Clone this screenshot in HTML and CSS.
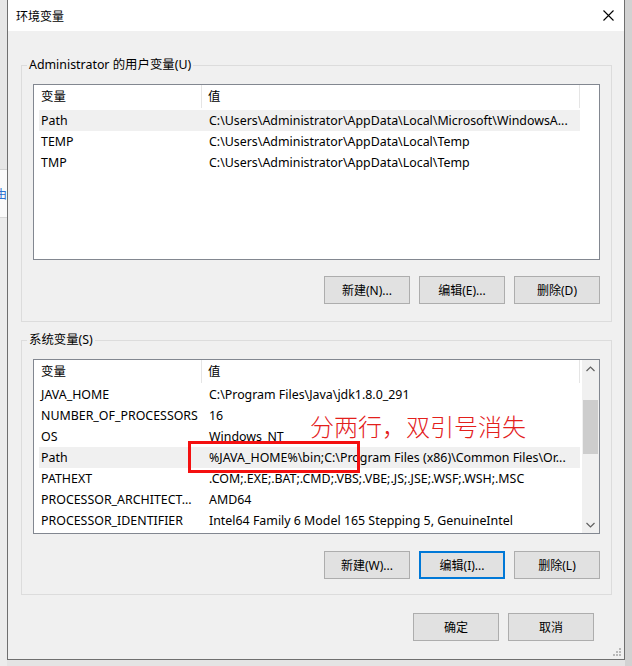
FILE: index.html
```html
<!DOCTYPE html>
<html lang="zh-CN">
<head>
<meta charset="utf-8">
<title>环境变量</title>
<link rel="stylesheet" href="styles.css">
</head>
<body>
<div class="screen">
  <div class="bg-left">
    <div class="bg-top"></div>
    <div class="bg-band"><span class="glyph">由</span></div>
    <div class="bg-rest"></div>
  </div>

  <div class="dialog">
    <div class="titlebar">
      <span class="title">环境变量</span>
      <svg class="close" width="11" height="11" viewBox="0 0 11 11"><path d="M0.5 0.5 L10.5 10.5 M10.5 0.5 L0.5 10.5" stroke="#000" stroke-width="1.1" fill="none"/></svg>
    </div>

    <div class="body">
      <fieldset class="group">
        <legend>Administrator 的用户变量(U)</legend>
        <div class="list list-user">
          <div class="rows">
            <div class="row head"><div>变量</div><div>值</div></div>
            <div class="row sel"><div>Path</div><div>C:\Users\Administrator\AppData\Local\Microsoft\WindowsA...</div></div>
            <div class="row"><div>TEMP</div><div>C:\Users\Administrator\AppData\Local\Temp</div></div>
            <div class="row"><div>TMP</div><div>C:\Users\Administrator\AppData\Local\Temp</div></div>
          </div>
        </div>
        <div class="btns">
          <div class="btn">新建(N)...</div>
          <div class="btn">编辑(E)...</div>
          <div class="btn">删除(D)</div>
        </div>
      </fieldset>

      <fieldset class="group group-sys">
        <legend>系统变量(S)</legend>
        <div class="list list-sys">
          <div class="rows">
            <div class="row head head-sys"><div>变量</div><div>值</div></div>
            <div class="row"><div>JAVA_HOME</div><div>C:\Program Files\Java\jdk1.8.0_291</div></div>
            <div class="row"><div>NUMBER_OF_PROCESSORS</div><div>16</div></div>
            <div class="row"><div>OS</div><div>Windows_NT</div></div>
            <div class="row sel"><div>Path</div><div>%JAVA_HOME%\bin;C:\Program Files (x86)\Common Files\Or...</div></div>
            <div class="row"><div>PATHEXT</div><div>.COM;.EXE;.BAT;.CMD;.VBS;.VBE;.JS;.JSE;.WSF;.WSH;.MSC</div></div>
            <div class="row"><div>PROCESSOR_ARCHITECT...</div><div>AMD64</div></div>
            <div class="row"><div>PROCESSOR_IDENTIFIER</div><div>Intel64 Family 6 Model 165 Stepping 5, GenuineIntel</div></div>
          </div>
          <div class="scroll">
            <div class="arrow"><svg width="9" height="6" viewBox="0 0 9 6"><path d="M0.5 5 L4.5 1 L8.5 5" stroke="#606060" stroke-width="1.2" fill="none"/></svg></div>
            <div class="thumb"></div>
            <div class="spacer"></div>
            <div class="arrow"><svg width="9" height="6" viewBox="0 0 9 6"><path d="M0.5 1 L4.5 5 L8.5 1" stroke="#606060" stroke-width="1.2" fill="none"/></svg></div>
          </div>
        </div>
        <div class="btns btns-sys">
          <div class="btn">新建(W)...</div>
          <div class="btn focus">编辑(I)...</div>
          <div class="btn">删除(L)</div>
        </div>
      </fieldset>

      <div class="footer">
        <div class="btn">确定</div>
        <div class="btn">取消</div>
      </div>

      <svg class="grip" width="8" height="8" viewBox="0 0 8 8">
        <rect x="6" y="0" width="2" height="2" fill="#b8b8b8"/>
        <rect x="3" y="3" width="2" height="2" fill="#b8b8b8"/>
        <rect x="6" y="3" width="2" height="2" fill="#b8b8b8"/>
        <rect x="0" y="6" width="2" height="2" fill="#b8b8b8"/>
        <rect x="3" y="6" width="2" height="2" fill="#b8b8b8"/>
        <rect x="6" y="6" width="2" height="2" fill="#b8b8b8"/>
      </svg>
    </div>
  </div>

  <div class="bg-right"></div>

  <div class="mark-box"></div>
  <div class="mark-text">分两行，双引号消失</div>
</div>
</body>
</html>
```

FILE: styles.css
```css
* { box-sizing: border-box; }
html, body { margin: 0; padding: 0; }
body {
  width: 632px;
  height: 666px;
  overflow: hidden;
  background: #e4e4e4;
  font-family: "Noto Sans", "Noto Sans CJK SC", sans-serif;
  font-size: 12.4px;
  color: #000;
}
.screen {
  position: relative;
  display: flex;
  width: 632px;
  height: 666px;
}

/* background window slices */
.bg-left {
  width: 7px;
  flex: none;
  display: flex;
  flex-direction: column;
  overflow: hidden;
  background: #ececec;
}
.bg-top { height: 170px; background: #e6e6e6; border-bottom: 1px solid #d2d2d2; }
.bg-band { height: 48px; background: #fafafa; border-bottom: 1px solid #d8d8d8; display: flex; align-items: center; }
.glyph { color: #2c6fd0; margin-left: -5px; font-size: 12px; }
.bg-rest { flex: 1; background: #ececec; }
.bg-right { width: 7px; flex: none; background: #d2d2d2; }

/* dialog */
.dialog {
  width: 618px;
  height: 660px;
  flex: none;
  border: 1px solid #6f6f6f;
  border-top: none;
  background: #f0f0f0;
  display: flex;
  flex-direction: column;
}
.titlebar {
  height: 31px;
  flex: none;
  background: #fff;
  display: flex;
  align-items: center;
  justify-content: space-between;
  padding: 0 10px 0 8px;
}
.title { font-size: 12px; }
.body {
  flex: 1;
  position: relative;
  padding: 0 12px 0 13px;
  display: flex;
  flex-direction: column;
}

.group {
  margin: 26px 0 0;
  padding: 11px 11px 17px;
  border: 1px solid #dcdcdc;
  min-width: 0;
}
.group legend {
  padding: 0 2px;
  margin-left: -6px;
  line-height: 16px;
}
.group-sys { margin-top: 10px; padding-bottom: 15px; }

.list {
  background: #fff;
  border: 1px solid #828790;
  display: flex;
}
.list-user { height: 176px; }
.list-sys { height: 175px; }
.rows { flex: 1; min-width: 0; }

.row {
  display: grid;
  grid-template-columns: 163px 378px;
  margin-left: 5px;
  width: 541px;
  height: 21px;
  align-items: center;
  line-height: 21px;
}
.row > div {
  padding-left: 2px;
  white-space: nowrap;
  overflow: hidden;
}
.row > div + div { padding-left: 7px; }
.row.sel { background: #f0f0f0; }
.row.head { height: 25px; align-items: start; }
.row.head-sys { height: 24px; }
.row.head > div {
  height: 23px;
  line-height: 23px;
  border-right: 1px solid #e5e5e5;
}
.row.head > div + div { padding-left: 6px; }

.scroll {
  width: 17px;
  flex: none;
  background: #f0f0f0;
  display: flex;
  flex-direction: column;
  align-items: center;
}
.arrow {
  height: 17px;
  width: 17px;
  display: flex;
  align-items: center;
  justify-content: center;
}
.thumb { width: 15px; height: 54px; margin-top: 23px; background: #cdcdcd; }
.spacer { flex: 1; }

.btns {
  display: flex;
  justify-content: flex-end;
  gap: 9px;
  margin-top: 16px;
}
.btns-sys { margin-top: 17px; }
.btn {
  width: 86px;
  height: 28px;
  background: #e1e1e1;
  border: 1px solid #adadad;
  display: flex;
  align-items: center;
  justify-content: center;
  font-size: 12px;
}
.btn.focus { border: 2px solid #0078d7; }

.footer {
  display: flex;
  justify-content: flex-end;
  gap: 9px;
  margin-top: 18px;
  padding-right: 18px;
}

.grip { position: absolute; right: 3px; bottom: 3px; }

/* annotation overlay */
.mark-box {
  position: absolute;
  left: 188px;
  top: 441px;
  width: 172px;
  height: 32px;
  border: 3px solid #f41010;
}
.mark-text {
  position: absolute;
  left: 310px;
  top: 412px;
  font-family: "Noto Sans CJK SC", sans-serif;
  font-weight: 300;
  font-size: 24px;
  line-height: 28px;
  color: #e3201c;
  white-space: nowrap;
}
```
